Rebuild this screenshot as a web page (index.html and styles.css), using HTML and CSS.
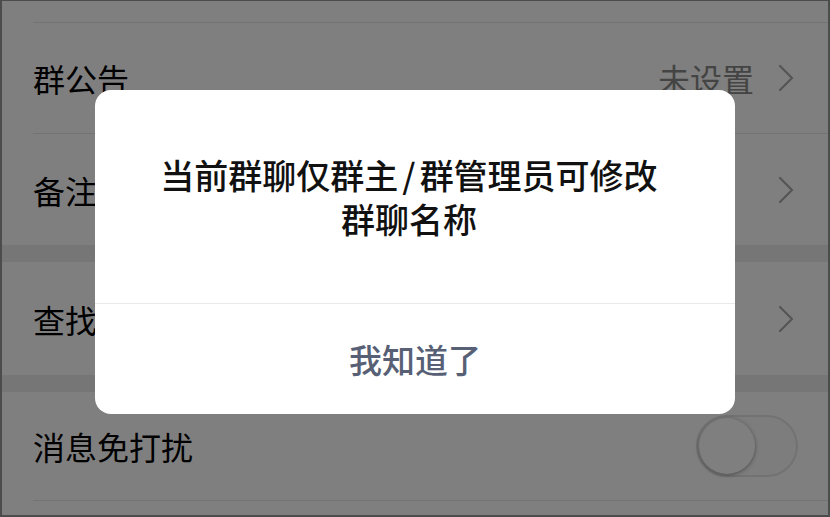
FILE: index.html
```html
<!DOCTYPE html>
<html lang="zh-CN">
<head>
<meta charset="utf-8">
<title>群聊信息</title>
<link rel="stylesheet" href="styles.css">
</head>
<body>
<div class="screen">
  <div class="group">
    <div class="row row-top"></div>
    <div class="row">
      <span class="label">群公告</span>
      <span class="right"><span class="value">未设置</span><svg class="chev" viewBox="0 0 16 28" width="16" height="28"><path d="M2 2 L14 14 L2 26" fill="none" stroke="#aaa" stroke-width="2.2" stroke-linecap="round" stroke-linejoin="round"/></svg></span>
    </div>
    <div class="row row-last">
      <span class="label">备注</span>
      <span class="right"><svg class="chev" viewBox="0 0 16 28" width="16" height="28"><path d="M2 2 L14 14 L2 26" fill="none" stroke="#aaa" stroke-width="2.2" stroke-linecap="round" stroke-linejoin="round"/></svg></span>
    </div>
  </div>
  <div class="group">
    <div class="row row-last row-find">
      <span class="label">查找聊天记录</span>
      <span class="right"><svg class="chev" viewBox="0 0 16 28" width="16" height="28"><path d="M2 2 L14 14 L2 26" fill="none" stroke="#aaa" stroke-width="2.2" stroke-linecap="round" stroke-linejoin="round"/></svg></span>
    </div>
  </div>
  <div class="group">
    <div class="row row-mute">
      <span class="label">消息免打扰</span>
      <span class="toggle"><span class="knob"></span></span>
    </div>
    <div class="row row-bottom"></div>
  </div>

  <div class="overlay">
    <div class="dialog">
      <div class="dialog-msg">
        <div class="msg-line">当前群聊仅群主<span class="slash">/</span>群管理员可修改</div>
        <div class="msg-line">群聊名称</div>
      </div>
      <div class="dialog-btn">我知道了</div>
    </div>
  </div>
</div>
</body>
</html>
```

FILE: styles.css
```css
html, body {
  margin: 0;
  padding: 0;
}
body {
  font-family: "Noto Sans CJK SC", "Noto Sans", sans-serif;
  background: #ededed;
}
.screen {
  position: relative;
  width: 830px;
  height: 517px;
  box-sizing: border-box;
  border: 2px solid #4c4c4c;
  border-top-width: 1px;
  background: #ededed;
  overflow: hidden;
  display: flex;
  flex-direction: column;
  gap: 17px;
}
.group {
  background: #fff;
  display: flex;
  flex-direction: column;
}
.row {
  display: flex;
  align-items: center;
  justify-content: space-between;
  height: 111px;
  margin-left: 31px;
  padding-right: 34px;
  border-bottom: 1px solid #e6e6e6;
  box-sizing: border-box;
}
.row-top {
  height: 22px;
}
.row-last {
  border-bottom: none;
}
.row-find {
  height: 113px;
}
.row-mute {
  height: 109px;
  padding-right: 30px;
}
.row-bottom {
  height: 40px;
  border-bottom: none;
}
.label {
  font-size: 32px;
  color: #000;
  line-height: 1;
}
.right {
  display: flex;
  align-items: center;
  gap: 24px;
}
.value {
  font-size: 32px;
  color: #888;
  line-height: 1;
}
.chev {
  display: block;
}
.toggle {
  position: relative;
  width: 102px;
  height: 62px;
  box-sizing: border-box;
  border-radius: 31px;
  border: 2px solid #e4e4e6;
  background: #fafafc;
}
.knob {
  position: absolute;
  left: 1px;
  top: 1px;
  width: 56px;
  height: 56px;
  border-radius: 50%;
  background: #fff;
  box-shadow: 0 1px 4px rgba(0,0,0,0.4);
}
.overlay {
  position: absolute;
  inset: 0;
  background: rgba(0,0,0,0.5);
  display: flex;
  justify-content: center;
  align-items: flex-start;
  padding-top: 89px;
}
.dialog {
  width: 640px;
  background: #fff;
  border-radius: 16px;
  overflow: hidden;
  display: flex;
  flex-direction: column;
}
.dialog-msg {
  height: 214px;
  box-sizing: border-box;
  display: flex;
  flex-direction: column;
  align-items: center;
  justify-content: center;
  text-align: center;
  font-size: 34px;
  font-weight: 500;
  color: #111;
  border-bottom: 1px solid #e9e9e9;
  padding: 0 46px 0 34px;
}
.msg-line {
  line-height: 44px;
  height: 44px;
  white-space: nowrap;
}
.slash {
  margin: 0 4px;
}
.dialog-btn {
  height: 110px;
  display: flex;
  align-items: center;
  justify-content: center;
  font-size: 33px;
  font-weight: 500;
  color: #576075;
}
```
